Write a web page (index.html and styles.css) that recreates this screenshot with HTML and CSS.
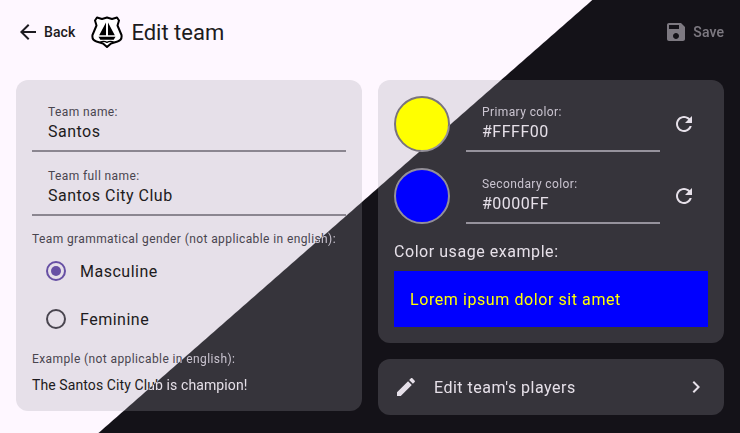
FILE: index.html
```html
<!DOCTYPE html>
<html lang="en">

<head>
    <meta charset="UTF-8">
    <title>Edit team</title>
    <link rel="stylesheet" href="styles.css">
</head>

<body>

    <!-- icons, used by both themes -->
    <svg class="defs" xmlns="http://www.w3.org/2000/svg">
        <symbol id="i_back" viewBox="0 0 24 24"><path d="M20 11H7.83l5.59-5.59L12 4l-8 8 8 8 1.41-1.41L7.83 13H20v-2z"/></symbol>
        <symbol id="i_save" viewBox="0 0 24 24"><path d="M17 3H5c-1.11 0-2 .9-2 2v14c0 1.1.89 2 2 2h14c1.1 0 2-.9 2-2V7l-4-4zm-5 16c-1.66 0-3-1.34-3-3s1.34-3 3-3 3 1.34 3 3-1.34 3-3 3zm3-10H5V5h10v4z"/></symbol>
        <symbol id="i_refresh" viewBox="0 0 24 24"><path d="M17.65 6.35C16.2 4.9 14.21 4 12 4c-4.42 0-7.99 3.58-7.99 8s3.57 8 7.99 8c3.73 0 6.84-2.55 7.73-6h-2.08c-.82 2.33-3.04 4-5.65 4-3.31 0-6-2.69-6-6s2.69-6 6-6c1.66 0 3.14.69 4.22 1.78L13 11h7V4l-2.35 2.35z"/></symbol>
        <symbol id="i_edit" viewBox="0 0 24 24"><path d="M3 17.25V21h3.75L17.81 9.94l-3.75-3.75L3 17.25zM20.71 7.04c.39-.39.39-1.02 0-1.41l-2.34-2.34c-.39-.39-1.02-.39-1.41 0l-1.83 1.83 3.75 3.75 1.83-1.83z"/></symbol>
        <symbol id="i_chevron" viewBox="0 0 24 24"><path d="M10 6L8.59 7.41 13.17 12l-4.58 4.59L10 18l6-6z"/></symbol>
        <symbol id="i_crest" viewBox="0 0 32 32">
            <path d="M16 1.500l5 1.500 5-1.500 2 3-1.500 5 4 9.500c.5 3-1 5.500-4 6.500l-6.500 2-4 3.500-4-3.500-6.500-2c-3-1-4.500-3.500-4-6.500l4-9.500-1.500-5 2-3 5 1.500z" fill="#fff" stroke="#000" stroke-width="2" stroke-linejoin="round"/>
            <path d="M15 6.500v12.700h-6.800zM17 6.500l6.800 12.700h-6.800z" fill="#000"/>
            <path d="M7.500 20.800h17l-1.800 2.900h-13.400z" fill="#000"/>
            <path d="M9 26.300c2.300-1.200 4.700-1.200 7 0 2.300-1.200 4.700-1.200 7 0" fill="none" stroke="#000" stroke-width="1.300"/>
        </symbol>
    </svg>

    <!-- light theme -->
    <div class="screen light">
        <div class="appbar">
            <a class="back"><svg class="icon"><use href="#i_back"/></svg>Back</a>
            <svg class="crest"><use href="#i_crest"/></svg>
            <h1 class="title">Edit team</h1>
            <a class="save"><svg class="icon"><use href="#i_save"/></svg>Save</a>
        </div>
        <div class="content">
            <div class="card team_card">
                <div class="field">
                    <span class="field_label">Team name:</span>
                    <span class="field_value">Santos</span>
                </div>
                <div class="field">
                    <span class="field_label">Team full name:</span>
                    <span class="field_value">Santos City Club</span>
                </div>
                <p class="small_label gender_label">Team grammatical gender (not applicable in english):</p>
                <div class="radio_row"><span class="radio checked"></span>Masculine</div>
                <div class="radio_row"><span class="radio"></span>Feminine</div>
                <p class="small_label example_label">Example (not applicable in english):</p>
                <p class="example_text">The Santos City Club is champion!</p>
            </div>
            <div class="side">
                <div class="card color_card">
                    <div class="color_row">
                        <span class="swatch yellow"></span>
                        <div class="field color_field">
                            <span class="field_label">Primary color:</span>
                            <span class="field_value">#FFFF00</span>
                        </div>
                        <svg class="icon reset"><use href="#i_refresh"/></svg>
                    </div>
                    <div class="color_row">
                        <span class="swatch blue"></span>
                        <div class="field color_field">
                            <span class="field_label">Secondary color:</span>
                            <span class="field_value">#0000FF</span>
                        </div>
                        <svg class="icon reset"><use href="#i_refresh"/></svg>
                    </div>
                    <p class="usage_label">Color usage example:</p>
                    <div class="usage_box">Lorem ipsum dolor sit amet</div>
                </div>
                <div class="card players_card">
                    <svg class="icon"><use href="#i_edit"/></svg>
                    <span class="players_text">Edit team's players</span>
                    <svg class="icon"><use href="#i_chevron"/></svg>
                </div>
            </div>
        </div>
    </div>

    <!-- dark theme, same screen masked over the light one -->
    <div class="screen dark" aria-hidden="true">
        <div class="appbar">
            <a class="back"><svg class="icon"><use href="#i_back"/></svg>Back</a>
            <svg class="crest"><use href="#i_crest"/></svg>
            <h1 class="title">Edit team</h1>
            <a class="save"><svg class="icon"><use href="#i_save"/></svg>Save</a>
        </div>
        <div class="content">
            <div class="card team_card">
                <div class="field">
                    <span class="field_label">Team name:</span>
                    <span class="field_value">Santos</span>
                </div>
                <div class="field">
                    <span class="field_label">Team full name:</span>
                    <span class="field_value">Santos City Club</span>
                </div>
                <p class="small_label gender_label">Team grammatical gender (not applicable in english):</p>
                <div class="radio_row"><span class="radio checked"></span>Masculine</div>
                <div class="radio_row"><span class="radio"></span>Feminine</div>
                <p class="small_label example_label">Example (not applicable in english):</p>
                <p class="example_text">The Santos City Club is champion!</p>
            </div>
            <div class="side">
                <div class="card color_card">
                    <div class="color_row">
                        <span class="swatch yellow"></span>
                        <div class="field color_field">
                            <span class="field_label">Primary color:</span>
                            <span class="field_value">#FFFF00</span>
                        </div>
                        <svg class="icon reset"><use href="#i_refresh"/></svg>
                    </div>
                    <div class="color_row">
                        <span class="swatch blue"></span>
                        <div class="field color_field">
                            <span class="field_label">Secondary color:</span>
                            <span class="field_value">#0000FF</span>
                        </div>
                        <svg class="icon reset"><use href="#i_refresh"/></svg>
                    </div>
                    <p class="usage_label">Color usage example:</p>
                    <div class="usage_box">Lorem ipsum dolor sit amet</div>
                </div>
                <div class="card players_card">
                    <svg class="icon"><use href="#i_edit"/></svg>
                    <span class="players_text">Edit team's players</span>
                    <svg class="icon"><use href="#i_chevron"/></svg>
                </div>
            </div>
        </div>
    </div>

</body>

</html>
```

FILE: styles.css
```css
* {
    box-sizing: border-box;
    font-family: Roboto, sans-serif;
}

body {
    margin: 0;
    overflow: hidden;
}

p,
h1 {
    margin: 0;
    font-weight: 400;
}

.defs {
    position: absolute;
    width: 0;
    height: 0;
}

/* theme colors */
.light {
    --bg: #fef7ff;
    --card: #e6e0e9;
    --text: #1d1b20;
    --soft: #49454f;
    --line: #79747e;
    --underline: #8b8690;
    --accent: #6750a4;
    --disabled: rgba(29, 27, 32, 0.38);
}

.dark {
    --bg: #141218;
    --card: #36343b;
    --text: #e6e0e9;
    --soft: #cac4d0;
    --line: #938f99;
    --underline: #96929c;
    --accent: #d0bcff;
    --disabled: rgba(230, 224, 233, 0.5);
    position: absolute;
    top: 0;
    left: 0;
    /* mask, not clip-path: a clipped edge leaves a dark hairline across the yellow swatch */
    mask-image: linear-gradient(138.76deg, transparent 390px, #000 391px);
}

.screen {
    width: 740px;
    height: 433px;
    background-color: var(--bg);
    color: var(--text);
}

.icon {
    width: 24px;
    height: 24px;
    fill: currentColor;
    flex: none;
}

/* top bar */
.appbar {
    height: 64px;
    display: flex;
    align-items: center;
    padding: 0 16px;
}

.back {
    display: flex;
    align-items: center;
    gap: 4px;
    font-size: 14px;
    font-weight: 500;
    letter-spacing: 0.1px;
}

.crest {
    width: 32px;
    height: 32px;
    margin-left: 16px;
    flex: none;
}

.title {
    font-size: 22px;
    margin-left: 8px;
}

.save {
    margin-left: auto;
    display: flex;
    align-items: center;
    gap: 5px;
    font-size: 14px;
    font-weight: 500;
    letter-spacing: 0.1px;
    color: var(--disabled);
}

/* cards */
.content {
    display: grid;
    grid-template-columns: 346px 346px;
    gap: 16px;
    padding: 16px;
}

.card {
    background-color: var(--card);
    border-radius: 12px;
}

.team_card {
    height: 331px;
    padding: 16px;
}

.side {
    display: flex;
    flex-direction: column;
    gap: 16px;
}

/* text fields */
.field {
    height: 56px;
    padding: 8px 16px 0;
    border-bottom: 2px solid var(--underline);
    display: flex;
    flex-direction: column;
    margin-bottom: 8px;
}

.field_label {
    font-size: 12px;
    line-height: 16px;
    letter-spacing: 0.4px;
    color: var(--soft);
}

.field_value {
    font-size: 16px;
    line-height: 24px;
    letter-spacing: 0.5px;
}

.small_label {
    font-size: 12px;
    line-height: 16px;
    letter-spacing: 0.4px;
    color: var(--soft);
}

.gender_label {
    margin-top: 15px;
}

/* radios */
.radio_row {
    height: 48px;
    display: flex;
    align-items: center;
    gap: 14px;
    padding-left: 14px;
    font-size: 16px;
    letter-spacing: 0.5px;
}

.radio {
    width: 20px;
    height: 20px;
    border: 2px solid var(--soft);
    border-radius: 50%;
    display: flex;
    align-items: center;
    justify-content: center;
}

.checked {
    border-color: var(--accent);
}

.checked::after {
    content: "";
    width: 10px;
    height: 10px;
    border-radius: 50%;
    background-color: var(--accent);
}

.example_label {
    margin-top: 8px;
}

.example_text {
    margin-top: 8px;
    font-size: 14px;
    line-height: 20px;
    letter-spacing: 0.1px;
}

/* colors */
.color_card {
    height: 263px;
    padding: 16px;
}

.color_row {
    display: flex;
    align-items: center;
    margin-bottom: 16px;
}

.swatch {
    width: 56px;
    height: 56px;
    border-radius: 50%;
    border: 2px solid var(--line);
    flex: none;
}

.yellow {
    background-color: #ffff00;
}

.blue {
    background-color: #0000ff;
}

.color_field {
    width: 194px;
    margin: 0 0 0 16px;
}

.reset {
    margin-left: 12px;
}

.usage_label {
    font-size: 16px;
    line-height: 24px;
    letter-spacing: 0.55px;
}

.usage_box {
    height: 56px;
    margin-top: 7px;
    padding-left: 16px;
    display: flex;
    align-items: center;
    background-color: #0000ff;
    color: #ffff00;
    font-size: 16px;
    letter-spacing: 0.58px;
}

.players_card {
    height: 56px;
    display: flex;
    align-items: center;
    padding: 0 16px;
}

.players_text {
    margin-left: 16px;
    font-size: 16px;
    letter-spacing: 0.5px;
    flex: 1;
}
```
